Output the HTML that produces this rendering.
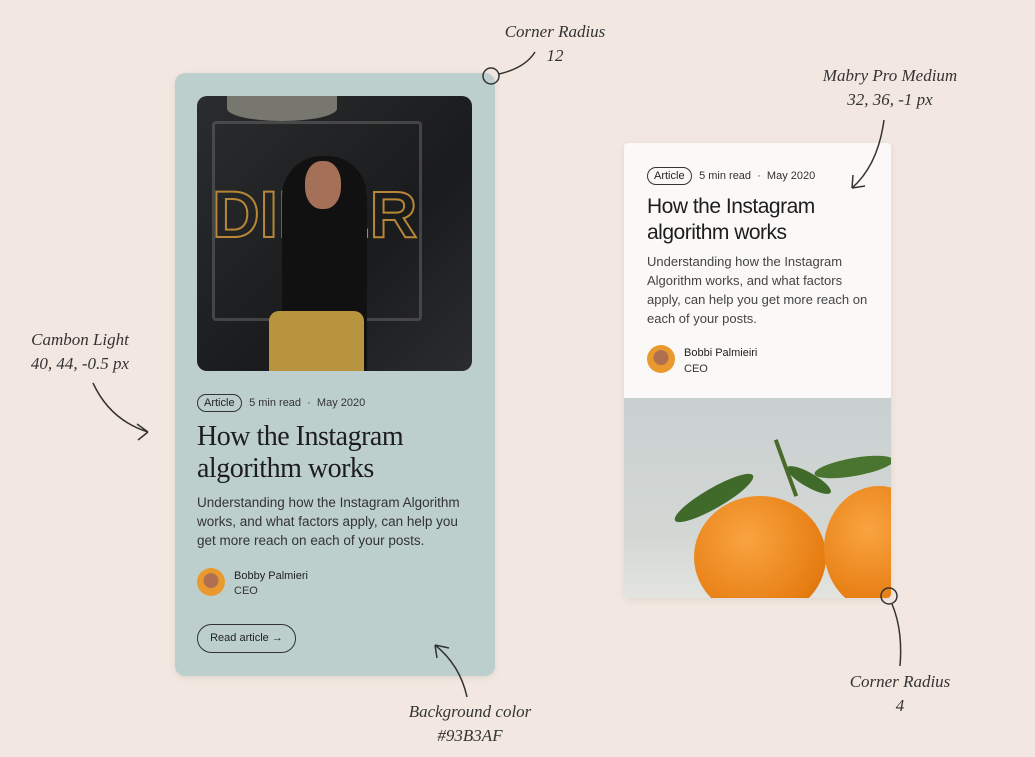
<!DOCTYPE html>
<html><head><meta charset="utf-8"><style>
*{margin:0;padding:0;box-sizing:border-box}
body{width:1035px;height:757px;background:#f3e8e1;position:relative;overflow:hidden;font-family:"Liberation Sans",sans-serif;color:#222}
.a{position:absolute}
.hand{font-family:"Liberation Serif",serif;font-style:italic;color:#333;font-size:17px;text-align:center;line-height:24px}
.card1{left:175px;top:73px;width:320px;height:603px;background:#bdcfcc;border-radius:10px;box-shadow:0 2px 8px rgba(0,0,0,.08)}
.img1{left:22px;top:23px;width:275px;height:275px;border-radius:10px;overflow:hidden;background:linear-gradient(135deg,#2a2c2e,#1a1b1d 60%,#2b2c2e)}
.pill{display:inline-block;border:1px solid #333;border-radius:12px;padding:2px 6px;font-size:11px}
.meta{font-size:11px;color:#333}
.card2{left:624px;top:143px;width:267px;height:455px;background:#fbf9f7;border-radius:4px;overflow:hidden;box-shadow:0 2px 8px rgba(0,0,0,.08)}
.av{width:28px;height:28px;border-radius:50%;background:radial-gradient(circle at 50% 45%,#b07050 0 7px,#e99a2e 8px);}
</style></head><body>

<div class="a card1">
 <div class="a img1">
  <div class="a" style="left:15px;top:25px;width:210px;height:200px;border:3px solid #6a6a6a;opacity:.5;border-radius:4px"></div>
  <div class="a" style="left:15px;top:80px;font:bold 66px 'Liberation Sans';color:transparent;-webkit-text-stroke:2px #c8923a;opacity:.9">DINER</div>
  <div class="a" style="left:85px;top:60px;width:85px;height:215px;background:#111;border-radius:40px 40px 0 0"></div>
  <div class="a" style="left:108px;top:65px;width:36px;height:48px;background:#a57058;border-radius:45%"></div>
  <div class="a" style="left:72px;top:215px;width:95px;height:60px;background:#b8943e;border-radius:10px 10px 0 0"></div>
  <div class="a" style="left:30px;top:0;width:110px;height:25px;border-radius:0 0 50% 50%;background:#77766f"></div>
 </div>
 <div class="a" style="left:22px;top:320px"><span class="pill">Article</span> <span class="meta">&nbsp;5 min read &nbsp;·&nbsp; May 2020</span></div>
 <div class="a" style="left:22px;top:348px;font:28px/32px 'Liberation Serif',serif;letter-spacing:-.5px;color:#1d1d1d">How the Instagram<br>algorithm works</div>
 <div class="a" style="left:22px;top:420px;font:13.5px/19px 'Liberation Sans';color:#333;width:280px">Understanding how the Instagram Algorithm works, and what factors apply, can help you get more reach on each of your posts.</div>
 <div class="a av" style="left:22px;top:495px"></div>
 <div class="a" style="left:59px;top:496px;font-size:11px;line-height:15px">Bobby Palmieri<br><span style="color:#333">CEO</span></div>
 <div class="a" style="left:22px;top:551px;width:99px;height:29px;border:1px solid #333;border-radius:15px;font-size:11px;line-height:27px;text-align:center">Read article →</div>
</div>

<div class="a card2">
 <div class="a" style="left:23px;top:23px"><span class="pill">Article</span> <span class="meta">&nbsp;5 min read &nbsp;·&nbsp; May 2020</span></div>
 <div class="a" style="left:23px;top:51px;font:21px/26px 'Liberation Sans';letter-spacing:-.5px;color:#1d1d1d">How the Instagram<br>algorithm works</div>
 <div class="a" style="left:23px;top:109px;font:13px/19px 'Liberation Sans';color:#444;width:228px">Understanding how the Instagram Algorithm works, and what factors apply, can help you get more reach on each of your posts.</div>
 <div class="a av" style="left:23px;top:202px"></div>
 <div class="a" style="left:60px;top:202px;font-size:11px;line-height:16px">Bobbi Palmieiri<br><span style="color:#333">CEO</span></div>
 <div class="a" style="left:0;top:255px;width:267px;height:200px;background:linear-gradient(180deg,#c9d0d0,#d4d8d5 70%,#e3e4df)">
  <div class="a" style="left:70px;top:98px;width:132px;height:122px;border-radius:50%;background:radial-gradient(circle at 40% 35%,#f9a440,#e67d12 70%,#c4620a)"></div>
  <div class="a" style="left:200px;top:88px;width:110px;height:125px;border-radius:50%;background:radial-gradient(circle at 40% 35%,#f9a440,#e67d12 70%,#c4620a)"></div>
  <div class="a" style="left:45px;top:90px;width:90px;height:20px;background:#3f6a2a;border-radius:50%;transform:rotate(-30deg)"></div>
  <div class="a" style="left:190px;top:60px;width:80px;height:18px;background:#4a7530;border-radius:50%;transform:rotate(-10deg)"></div>
  <div class="a" style="left:160px;top:75px;width:50px;height:14px;background:#3f6a2a;border-radius:50%;transform:rotate(30deg)"></div>
  <div class="a" style="left:160px;top:40px;width:4px;height:60px;background:#4a6a2a;transform:rotate(-20deg)"></div>
 </div>
</div>

<div class="a hand" style="left:495px;top:20px;width:120px">Corner Radius<br>12</div>
<div class="a hand" style="left:800px;top:64px;width:180px">Mabry Pro Medium<br>32, 36, -1 px</div>
<div class="a hand" style="left:10px;top:328px;width:140px">Cambon Light<br>40, 44, -0.5 px</div>
<div class="a hand" style="left:395px;top:700px;width:150px">Background color<br>#93B3AF</div>
<div class="a hand" style="left:830px;top:670px;width:140px">Corner Radius<br>4</div>
<svg class="a" style="left:0;top:0" width="1035" height="757" fill="none" stroke="#333" stroke-width="1.5">
 <circle cx="491" cy="76" r="8"/><path d="M499 74 Q525 68 535 52"/>
 <path d="M884 120 Q878 165 852 188 M852 188 L853 175 M852 188 L865 186"/>
 <path d="M93 383 Q110 420 148 432 M148 432 L137 424 M148 432 L138 440"/>
 <path d="M467 697 Q460 665 435 645 M435 645 L437 658 M435 645 L449 648"/>
 <circle cx="889" cy="596" r="8"/><path d="M892 604 Q903 630 900 666"/>
</svg>
</body></html>
